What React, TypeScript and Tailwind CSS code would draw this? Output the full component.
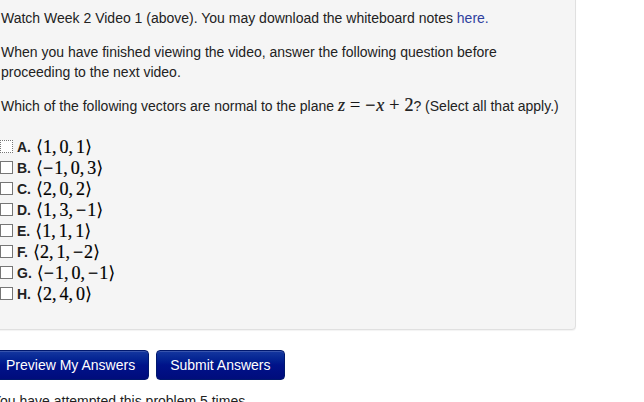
const options = [
  { label: 'A.', v: ['1', '0', '1'] },
  { label: 'B.', v: ['−1', '0', '3'] },
  { label: 'C.', v: ['2', '0', '2'] },
  { label: 'D.', v: ['1', '3', '−1'] },
  { label: 'E.', v: ['1', '1', '1'] },
  { label: 'F.', v: ['2', '1', '−2'] },
  { label: 'G.', v: ['−1', '0', '−1'] },
  { label: 'H.', v: ['2', '4', '0'] },
]

const mathFont = { fontFamily: '"Liberation Serif", "DejaVu Serif", serif' }

function Vec({ v }: { v: string[] }) {
  return (
    <span className="text-[18px] leading-none text-black [-webkit-text-stroke:0.2px_black]" style={mathFont}>
      <span className="font-['DejaVu_Serif'] text-[18px] [-webkit-text-stroke:0]">⟨</span>
      {v.map((n, i) => (
        <span key={i}>
          {n.startsWith('−') ? (
            <>
              <span className="mr-[1px]">−</span>
              {n.slice(1)}
            </>
          ) : (
            n
          )}
          {i < v.length - 1 ? <span className="mr-[3px]">,</span> : null}
        </span>
      ))}
      <span className="font-['DejaVu_Serif'] text-[18px] [-webkit-text-stroke:0]">⟩</span>
    </span>
  )
}

function Button({ children }: { children: string }) {
  return (
    <button className="h-[30px] rounded-[4px] border border-[#00186e] bg-gradient-to-b from-[#15379f] via-[#00128a] to-[#000c7c] px-[13px] text-[14px] text-white shadow-[inset_0_1px_0_rgba(255,255,255,0.15)]">
      {children}
    </button>
  )
}

export default function App() {
  return (
    <div className="h-[402px] w-[644px] overflow-hidden bg-white font-['Liberation_Sans',Arial,sans-serif] text-[14px] leading-[20px] text-[#222]">
      <div className="ml-[-8px]">
        <div className="mt-[-20px] w-[584px] rounded-[4px] border border-[#e0e0e0] bg-[#f5f5f5] pb-[25px] pl-[8px] pt-[27px] shadow-[0_1px_1px_rgba(0,0,0,0.05)]">
          <p>
            Watch Week 2 Video 1 (above). You may download the whiteboard notes{' '}
            <span className="text-[#2f3f9e]">here.</span>
          </p>
          <p className="mt-[14px] w-[510px]">
            When you have finished viewing the video, answer the following question before proceeding to the next
            video.
          </p>
          <p className="mt-[13px]">
            Which of the following vectors are normal to the plane{' '}
            <span className="text-[18px] [-webkit-text-stroke:0.2px_black]" style={mathFont}>
              <i>z</i>
              <span className="mx-[5px]">=</span>
              <span className="mr-[1px]">−</span>
              <i>x</i>
              <span className="mx-[5px]">+</span>2
            </span>
            ? (Select all that apply.)
          </p>
          <div className="mt-[20px] flex flex-col">
            {options.map((o, i) => (
              <div key={o.label} className="flex h-[21px] items-center">
                <span
                  className={
                    i === 0
                      ? 'ml-[-1px] h-[13px] w-[13px] border border-dotted border-[#777] bg-white'
                      : 'ml-[-1px] h-[13px] w-[13px] border border-[#767676] bg-white'
                  }
                />
                <span className="ml-[4px] mr-[5px] font-bold">{o.label}</span>
                <Vec v={o.v} />
              </div>
            ))}
          </div>
        </div>
        <div className="mt-[20px] flex gap-[7px]">
          <Button>Preview My Answers</Button>
          <Button>Submit Answers</Button>
        </div>
        <p className="mt-[11px]">You have attempted this problem 5 times.</p>
      </div>
    </div>
  )
}
